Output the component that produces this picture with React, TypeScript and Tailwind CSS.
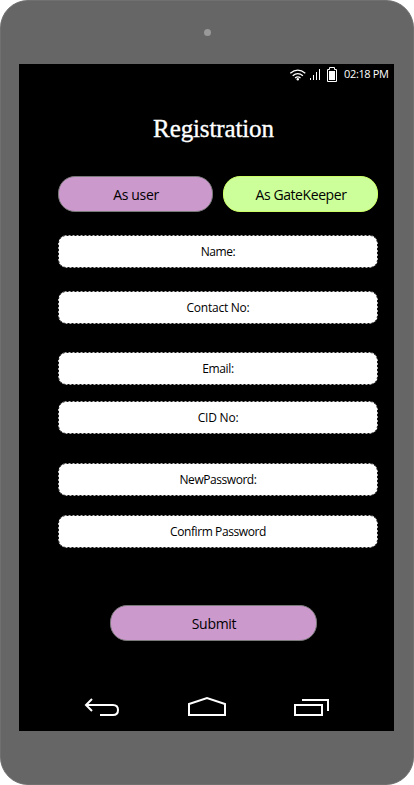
import type { ReactNode } from 'react';

function Field({ label, gap, tracking = '' }: { label: string; gap: string; tracking?: string }) {
  return (
    <div className={`relative flex h-[33px] w-[320px] items-center justify-center ${gap}`}>
      <svg className="absolute inset-0" width="320" height="33">
        <rect x="0.3" y="0.3" width="319.4" height="32.4" rx="8" fill="#fff" />
        <rect x="0.5" y="0.5" width="319" height="32" rx="8" fill="none" stroke="#111" strokeDasharray="2 2" />
      </svg>
      <span className={`relative text-[12px] leading-4 whitespace-nowrap text-black ${tracking}`}>{label}</span>
    </div>
  );
}

function Pill({ children, look }: { children: ReactNode; look: string }) {
  return (
    <button className={`flex h-9 items-center justify-center rounded-[17px] border pt-[2px] pl-px text-[14px] leading-5 text-black ${look}`}>
      {children}
    </button>
  );
}

export default function App() {
  return (
    <div className="h-[785px] w-[414px] bg-white font-['Open_Sans','Noto_Sans',sans-serif]">
      <div className="flex h-full flex-col rounded-[28px] border border-[#707070] bg-[#666] px-[18px]">
        <div className="flex h-[63px] shrink-0 justify-center pt-[27px]">
          <span className="mt-px h-[7px] w-[7px] rounded-full bg-[#999]" />
        </div>
        <main className="flex h-[667px] w-[375px] shrink-0 flex-col bg-black">
          <div className="flex h-5 shrink-0 items-center justify-end pr-[5px] text-white">
            <svg width="50" height="16" viewBox="0 0 50 16" fill="none" stroke="white">
              <path d="M1.3 7.2Q8.8.9 16.3 7.2M3.7 9.7Q8.8 5.4 13.9 9.7M6.1 12Q8.8 9.9 11.5 12" strokeWidth="1.3" />
              <circle cx="8.8" cy="13.3" r="1.2" fill="white" stroke="none" />
              <path d="M21.5 12v2M24.5 9v5M27.5 6v8M30.5 3v11" />
              <path d="M38.5 3.5h2v-2h5v2h2v12h-9z" />
              <path d="M40 5h6v9h-6z" fill="white" stroke="none" />
            </svg>
            <span className="ml-[5px] w-[45px] text-[11px] leading-4 font-medium tracking-[-0.35px] whitespace-nowrap">02:18 PM</span>
          </div>
          <h1 className="mt-[29px] h-8 pl-[14px] text-center font-['Liberation_Serif',serif] text-[25px] leading-8 tracking-[-0.12px] text-white [-webkit-text-stroke:0.35px_white]">Registration</h1>
          <div className="mt-[31px] flex gap-[10px] pl-[39px]">
            <Pill look="w-[155px] border-[#797979] bg-[#c9c] tracking-[-0.35px]">As user</Pill>
            <Pill look="w-[155px] border-[#cf6] bg-[#cf9] tracking-[-0.42px]">As GateKeeper</Pill>
          </div>
          <form className="flex flex-col pl-[39px]">
            <Field label="Name:" gap="mt-[23px]" tracking="tracking-[-0.4px]" />
            <Field label="Contact No:" gap="mt-[23px]" tracking="tracking-[-0.25px]" />
            <Field label="Email:" gap="mt-[28px]" tracking="tracking-[-0.35px]" />
            <Field label="CID No:" gap="mt-[16px]" tracking="tracking-[-0.2px]" />
            <Field label="NewPassword:" gap="mt-[29px]" tracking="tracking-[-0.45px]" />
            <Field label="Confirm Password" gap="mt-[19px]" tracking="tracking-[-0.4px]" />
          </form>
          <div className="mt-[57px] pl-[91px]">
            <Pill look="w-[207px] border-[#797979] bg-[#c9c] tracking-[-0.3px]">Submit</Pill>
          </div>
          <nav className="mt-[55px] flex h-6 pl-[64px]">
            <svg width="38" height="24" viewBox="0 0 38 24" fill="none" stroke="white" strokeWidth="2">
              <path d="M3 9h27c3 0 5 2 5 5s-2 5-5 5H17M9 3L3 9l6 6" />
            </svg>
            <svg className="ml-[66px]" width="40" height="24" viewBox="0 0 40 24" fill="none" stroke="white" strokeWidth="2">
              <path d="M2 19V8l18-6 18 6v11z" />
            </svg>
            <svg className="ml-[66px]" width="38" height="24" viewBox="0 0 38 24" fill="none" stroke="white" strokeWidth="2">
              <path d="M2 9h27v10H2zM9 4h26v11" />
            </svg>
          </nav>
        </main>
      </div>
    </div>
  );
}
